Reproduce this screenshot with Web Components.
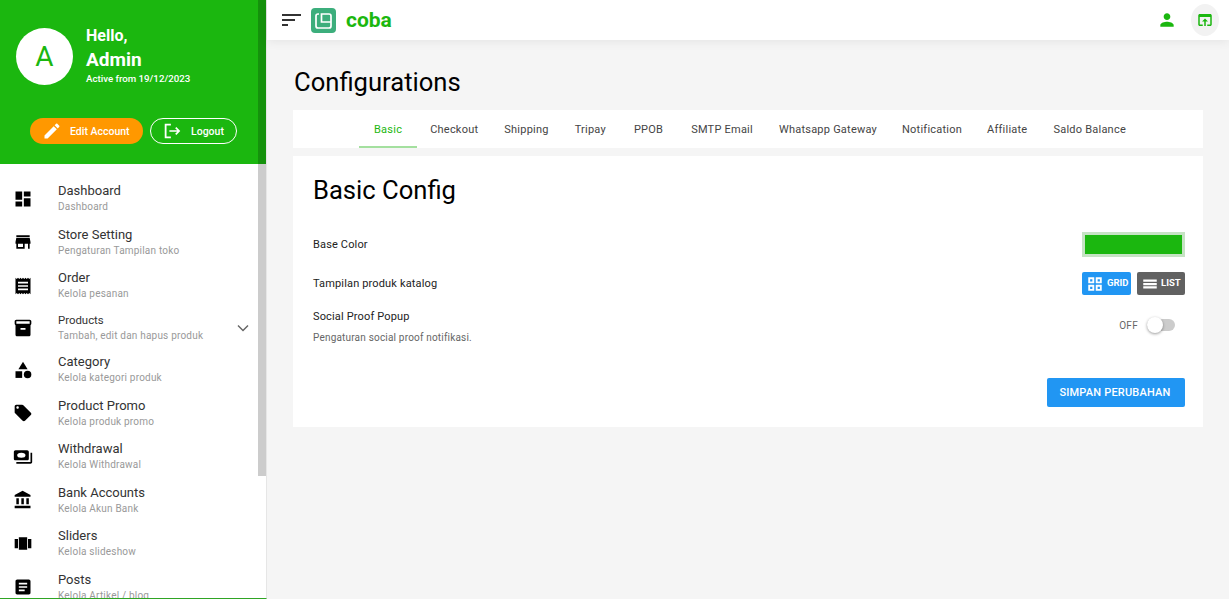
<!DOCTYPE html>
<html lang="id">
<head>
<meta charset="utf-8">
<title>Configurations</title>
<style>
  html, body { margin: 0; height: 100%; overflow: hidden; }
  body { font-family: Roboto, "Liberation Sans", sans-serif; background: #f5f5f5; }
</style>
</head>
<body>
<app-shell>
  <side-bar slot="side">
    <side-item icon="dashboard" title="Dashboard" sub="Dashboard"></side-item>
    <side-item icon="store" title="Store Setting" sub="Pengaturan Tampilan toko"></side-item>
    <side-item icon="receipt" title="Order" sub="Kelola pesanan"></side-item>
    <side-item icon="inventory" title="Products" sub="Tambah, edit dan hapus produk" small chevron></side-item>
    <side-item icon="category" title="Category" sub="Kelola kategori produk"></side-item>
    <side-item icon="offer" title="Product Promo" sub="Kelola produk promo"></side-item>
    <side-item icon="payments" title="Withdrawal" sub="Kelola Withdrawal"></side-item>
    <side-item icon="bank" title="Bank Accounts" sub="Kelola Akun Bank"></side-item>
    <side-item icon="carousel" title="Sliders" sub="Kelola slideshow"></side-item>
    <side-item icon="article" title="Posts" sub="Kelola Artikel / blog"></side-item>
  </side-bar>
  <top-bar slot="top"></top-bar>
  <config-page></config-page>
</app-shell>

<script>
const ICONS = {
  dashboard: '<path d="M3 13h8V3H3v10zm0 8h8v-6H3v6zm10 0h8V11h-8v10zm0-18v6h8V3h-8z"/>',
  store: '<path d="M20 4H4v2h16V4zm1 10v-2l-1-5H4l-1 5v2h1v6h10v-6h4v6h2v-6h1zm-9 4H6v-4h6v4z"/>',
  receipt: '<path d="M18 17H6v-2h12v2zm0-4H6v-2h12v2zm0-4H6V7h12v2zM3 22l1.5-1.5L6 22l1.5-1.5L9 22l1.5-1.5L12 22l1.5-1.5L15 22l1.5-1.5L18 22l1.5-1.5L21 22V2l-1.5 1.5L18 2l-1.5 1.5L15 2l-1.5 1.5L12 2l-1.5 1.5L9 2 7.5 3.5 6 2 4.5 3.5 3 2v20z"/>',
  inventory: '<path d="M20 2H4c-1 0-2 .9-2 2v3.01c0 .72.43 1.34 1 1.69V20c0 1.1 1.1 2 2 2h14c.9 0 2-.9 2-2V8.7c.57-.35 1-.97 1-1.69V4c0-1.1-1-2-2-2zm-5 12H9v-2h6v2zm5-7H4V4h16v3z"/>',
  category: '<path d="M12 2l-5.5 9h11z"/><circle cx="17.5" cy="17.5" r="4.5"/><path d="M3 13.5h8v8H3z"/>',
  offer: '<path d="M21.41 11.58l-9-9C12.05 2.22 11.55 2 11 2H4c-1.1 0-2 .9-2 2v7c0 .55.22 1.05.59 1.42l9 9c.36.36.86.58 1.41.58.55 0 1.05-.22 1.41-.59l7-7c.37-.36.59-.86.59-1.41 0-.55-.23-1.06-.59-1.42zM5.5 7C4.67 7 4 6.33 4 5.5S4.67 4 5.5 4 7 4.67 7 5.5 6.33 7 5.5 7z"/>',
  payments: '<path fill-rule="evenodd" d="M19 14V6c0-1.1-.9-2-2-2H3c-1.1 0-2 .9-2 2v8c0 1.1.9 2 2 2h14c1.1 0 2-.9 2-2zM5 10a5 3 0 1 0 10 0a5 3 0 1 0-10 0z"/><path d="M23 7v11c0 1.1-.9 2-2 2H4v-2h17V7h2z"/>',
  bank: '<path d="M4 10v7h3v-7H4zm6 0v7h3v-7h-3zM2 22h19v-3H2v3zm14-12v7h3v-7h-3zm-4.5-9L2 6v2h19V6l-9.5-5z"/>',
  carousel: '<path d="M7 19h10V4H7v15zm-5-2h4V6H2v11zM18 6v11h4V6h-4z"/>',
  article: '<path d="M19 3H5c-1.1 0-2 .9-2 2v14c0 1.1.9 2 2 2h14c1.1 0 2-.9 2-2V5c0-1.1-.9-2-2-2zm-5 14H7v-2h7v2zm3-4H7v-2h10v2zm0-4H7V7h10v2z"/>',
  person: '<path d="M12 12c2.21 0 4-1.79 4-4s-1.79-4-4-4-4 1.79-4 4 1.79 4 4 4zm0 2c-2.67 0-8 1.34-8 4v2h16v-2c0-2.66-5.33-4-8-4z"/>',
  browser: '<path d="M19 4H5c-1.11 0-2 .9-2 2v12c0 1.1.89 2 2 2h4v-2H5V8h14v10h-4v2h4c1.1 0 2-.9 2-2V6c0-1.1-.89-2-2-2zm-7 6l-4 4h3v6h2v-6h3l-4-4z"/>',
  edit: '<path d="M3 17.25V21h3.75L17.81 9.94l-3.75-3.75L3 17.25zM20.71 7.04c.39-.39.39-1.02 0-1.41l-2.34-2.34c-.39-.39-1.02-.39-1.41 0l-1.83 1.83 3.75 3.75 1.83-1.83z"/>',
  logout: '<path d="M10.5 3.5H3.5v17h7" fill="none" stroke="currentColor" stroke-width="2.4"/><path d="M8.5 12h13M17 7.5l4.5 4.5-4.5 4.5" fill="none" stroke="currentColor" stroke-width="2.2"/>',
  grid: '<path d="M3 3v8h8V3H3zm5.5 5.5h-3v-3h3v3zM3 13v8h8v-8H3zm5.5 5.5h-3v-3h3v3zM13 3v8h8V3h-8zm5.5 5.5h-3v-3h3v3zM13 13v8h8v-8h-8zm5.5 5.5h-3v-3h3v3z"/>',
  list: '<path d="M3 6h18v3H3zM3 10.5h18v3H3zM3 15h18v3H3z"/>',
  chevron: '<path d="M6 9l6 6 6-6" fill="none" stroke="currentColor" stroke-width="1.7"/>',
};

function svg(name, size) {
  return `<svg width="${size}" height="${size}" viewBox="0 0 24 24" fill="currentColor" aria-hidden="true">${ICONS[name]}</svg>`;
}

class AppShell extends HTMLElement {
  constructor() {
    super();
    this.attachShadow({ mode: 'open' }).innerHTML = `
      <style>
        :host { display: flex; height: 599px; background: #f5f5f5; }
        .side { flex: 0 0 267px; min-width: 0; }
        .main { flex: 1; min-width: 0; display: flex; flex-direction: column; }
      </style>
      <div class="side"><slot name="side"></slot></div>
      <div class="main"><slot name="top"></slot><slot></slot></div>`;
  }
}

class SideBar extends HTMLElement {
  constructor() {
    super();
    this.attachShadow({ mode: 'open' }).innerHTML = `
      <style>
        :host { display: block; position: relative; height: 599px; box-sizing: border-box; background: #fff;
          border-right: 1px solid #e6e6e6; border-bottom: 1px solid #2fa524; overflow: hidden; }
        .head { height: 164px; box-sizing: border-box; background: #1bb70f; color: #fff; padding: 28px 16px 0; }
        .who { display: flex; gap: 13px; }
        .avatar { width: 57px; height: 57px; border-radius: 50%; background: #fff; color: #1bb70f;
          display: flex; align-items: center; justify-content: center; font-size: 28px; }
        .hello { font-size: 16px; font-weight: 700; line-height: 20px; margin-top: -2px; }
        .name { font-size: 19px; font-weight: 700; line-height: 22px; margin-top: 3px; }
        .since { font-size: 9.7px; line-height: 12px; font-weight: 500; margin-top: 2px; }
        .btns { display: flex; gap: 7px; margin: 33px 0 0 14px; }
        .btn { height: 26px; box-sizing: border-box; border-radius: 13px; display: flex; align-items: center;
          font-size: 10.5px; font-weight: 500; color: #fff; }
        .edit { width: 113px; background: #ff9800; padding-left: 12px; gap: 8px; }
        .out { width: 87px; border: 1px solid #fff; padding-left: 12px; gap: 10px; }
        .list { padding-top: 13px; }
        .bar { position: absolute; top: 0; right: 0; width: 8px; height: 476px; background: rgba(0,0,0,.2); }
      </style>
      <div class="head">
        <div class="who">
          <div class="avatar">A</div>
          <div>
            <div class="hello">Hello,</div>
            <div class="name">Admin</div>
            <div class="since">Active from 19/12/2023</div>
          </div>
        </div>
        <div class="btns">
          <div class="btn edit">${svg('edit', 20)}<span>Edit Account</span></div>
          <div class="btn out">${svg('logout', 18)}<span>Logout</span></div>
        </div>
      </div>
      <div class="list"><slot></slot></div>
      <div class="bar"></div>`;
  }
}

class SideItem extends HTMLElement {
  constructor() {
    super();
    const small = this.hasAttribute('small');
    this.attachShadow({ mode: 'open' }).innerHTML = `
      <style>
        :host { display: flex; align-items: center; height: ${small ? 40.5 : 43.5}px; box-sizing: border-box; padding-left: 13px; color: #000; }
        .ic { flex: 0 0 20px; height: 20px; margin-right: 25px; display: flex; }
        .txt { flex: 1; margin-top: -1px; }
        .t { font-size: ${small ? 11.4 : 13}px; line-height: ${small ? 14 : 16}px; color: #333; }
        .s { font-size: 10px; line-height: 13px; color: #999; letter-spacing: .2px; margin-top: ${small ? 2 : 1}px; }
        .chev { color: #666; margin-right: 13px; display: flex; }
      </style>
      <span class="ic">${svg(this.getAttribute('icon'), 20)}</span>
      <div class="txt">
        <div class="t">${this.getAttribute('title')}</div>
        <div class="s">${this.getAttribute('sub')}</div>
      </div>
      ${this.hasAttribute('chevron') ? `<span class="chev">${svg('chevron', 20)}</span>` : ''}`;
    this.removeAttribute('title');
  }
}

class TopBar extends HTMLElement {
  constructor() {
    super();
    this.attachShadow({ mode: 'open' }).innerHTML = `
      <style>
        :host { display: flex; align-items: center; flex: 0 0 40px; height: 40px; background: #fff;
          box-shadow: 0 1px 10px rgba(0,0,0,.08); padding: 0 10px 0 15px; position: relative; }
        .menu { display: flex; flex-direction: column; gap: 3.4px; width: 29px; }
        .menu i { display: block; height: 2px; background: #333; }
        .logo { width: 25px; height: 25px; border-radius: 4px; background: #3cae7c; display: flex; margin-right: 10px; }
        .brand { font-size: 21px; font-weight: 700; color: #1bb70f; flex: 1; }
        .user { color: #1bb70f; display: flex; margin-right: 14px; }
        .up { width: 28px; height: 32px; border-radius: 50%; background: #f2f2f2; color: #1bb70f;
          display: flex; align-items: center; justify-content: center; }
      </style>
      <div class="menu"><i style="width:19px"></i><i style="width:13px"></i><i style="width:6px"></i></div>
      <div class="logo"><svg width="25" height="25" viewBox="0 0 25 25" fill="none" stroke="#fff" stroke-width="1.7"><path d="M8 6H7a2 2 0 0 0-2 2V18a2 2 0 0 0 2 2H18a2 2 0 0 0 2-2V8a2 2 0 0 0-2-2H10.500V14H20"/></svg></div>
      <div class="brand">coba</div>
      <span class="user">${svg('person', 20)}</span>
      <span class="up">${svg('browser', 18)}</span>`;
  }
}

class ConfigTabs extends HTMLElement {
  constructor() {
    super();
    // second value: small left nudge, the text widths differ a little from the reference
    const tabs = [['Basic', 2], ['Checkout', 0], ['Shipping', 0], ['Tripay', 0], ['PPOB', 2], ['SMTP Email', 2],
      ['Whatsapp Gateway', 0], ['Notification', -1], ['Affiliate', -1], ['Saldo Balance', 0]];
    this.attachShadow({ mode: 'open' }).innerHTML = `
      <style>
        :host { display: flex; justify-content: center; height: 38px; background: #fff; }
        .tab { padding: 2px 13px 0; display: flex; align-items: center; font-size: 11px; font-weight: 400;
          color: #444; letter-spacing: .23px; box-sizing: border-box; border-bottom: 2px solid transparent; white-space: nowrap; }
        .tab.on { color: #1bb70f; border-bottom-color: #a4e09f; padding: 2px 15px 0; }
      </style>
      ${tabs.map(([n, dx], i) => `<div class="tab${i ? '' : ' on'}" style="margin-left:${dx}px">${n}</div>`).join('')}`;
  }
}

class ConfigRow extends HTMLElement {
  constructor() {
    super();
    this.attachShadow({ mode: 'open' }).innerHTML = `
      <style>
        :host { display: flex; justify-content: space-between; align-items: center; }
        .l { font-size: 11px; color: #222; letter-spacing: .15px; }
        .d { font-size: 10px; color: #666; letter-spacing: .19px; margin-top: 9px; }
      </style>
      <div>
        <div class="l">${this.getAttribute('label')}</div>
        ${this.hasAttribute('desc') ? `<div class="d">${this.getAttribute('desc')}</div>` : ''}
      </div>
      <slot></slot>`;
  }
}

class ConfigPage extends HTMLElement {
  constructor() {
    super();
    this.attachShadow({ mode: 'open' }).innerHTML = `
      <style>
        :host { display: block; padding: 26px 26px 0 26px; }
        h1 { margin: 0 0 12px; font-size: 25.6px; font-weight: 400; line-height: 32px; color: #000; padding-left: 1px; }
        .card { margin-top: 8px; background: #fff; padding: 16px 18px 20px 20px; height: 271px; box-sizing: border-box; }
        h2 { margin: 0 0 24px; font-size: 25.6px; font-weight: 400; line-height: 36px; color: #000; }
        .color { width: 103px; height: 25px; box-sizing: border-box; background: #1bb70f; border: 3px solid #c6e3c4; }
        .views { display: flex; gap: 6px; }
        .v { height: 23px; border-radius: 2px; color: #fff; display: flex; align-items: center;
          font-size: 9.5px; font-weight: 700; box-sizing: border-box; padding-left: 4px; }
        .v span { padding-bottom: 2px; }
        .grid { width: 49px; background: #2196f3; gap: 3px; }
        .lst { width: 48px; background: #616161; gap: 2px; }
        .sw { display: flex; align-items: center; margin: -3px 10px 0 0; gap: 9px; font-size: 10px; color: #666; letter-spacing: .3px; }
        .track { width: 28px; height: 12px; border-radius: 6px; background: #ccc; position: relative; }
        .knob { position: absolute; left: 0; top: -2px; width: 16px; height: 16px; border-radius: 50%; background: #fff;
          box-shadow: 0 1px 3px rgba(0,0,0,.4); }
        .foot { display: flex; justify-content: flex-end; margin-top: 35px; }
        .save { width: 138px; height: 29px; box-sizing: border-box; padding-right: 2px; background: #2196f3; color: #fff; border-radius: 2px; font-size: 11px;
          font-weight: 500; display: flex; align-items: center; justify-content: center; letter-spacing: .2px; }
        .r1, .r2 { margin-bottom: 15px; }
      </style>
      <h1>Configurations</h1>
      <config-tabs></config-tabs>
      <div class="card">
        <h2>Basic Config</h2>
        <config-row class="r1" label="Base Color"><div class="color"></div></config-row>
        <config-row class="r2" label="Tampilan produk katalog">
          <div class="views">
            <div class="v grid">${svg('grid', 18)}<span>GRID</span></div>
            <div class="v lst">${svg('list', 18)}<span>LIST</span></div>
          </div>
        </config-row>
        <config-row label="Social Proof Popup" desc="Pengaturan social proof notifikasi.">
          <div class="sw">OFF<div class="track"><div class="knob"></div></div></div>
        </config-row>
        <div class="foot"><div class="save">SIMPAN PERUBAHAN</div></div>
      </div>`;
  }
}

customElements.define('app-shell', AppShell);
customElements.define('side-bar', SideBar);
customElements.define('side-item', SideItem);
customElements.define('top-bar', TopBar);
customElements.define('config-tabs', ConfigTabs);
customElements.define('config-row', ConfigRow);
customElements.define('config-page', ConfigPage);
</script>
</body>
</html>
